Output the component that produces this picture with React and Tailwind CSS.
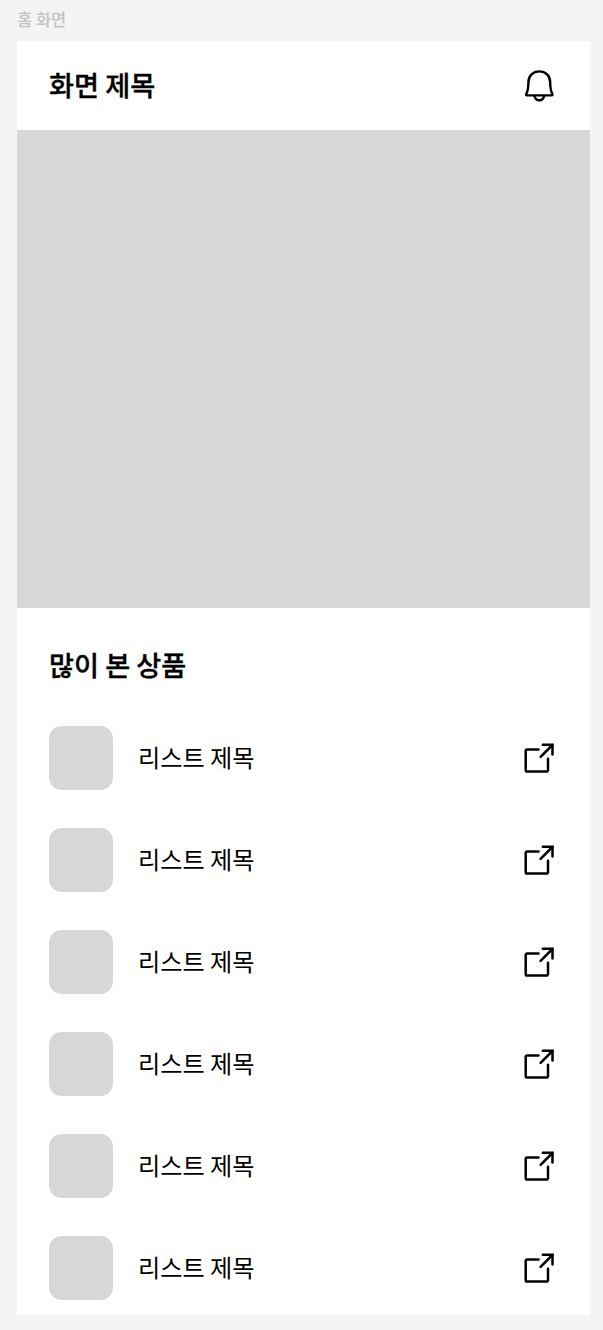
const items = [1, 2, 3, 4, 5, 6].map((id) => ({ id, title: "리스트 제목" }));

function BellIcon() {
	return (
		<svg
			className="h-9 w-9"
			viewBox="0 0 36 36"
			fill="none"
			stroke="currentColor"
			strokeWidth={2.4}
			strokeLinejoin="round"
		>
			<path d="M7.4 14.4C7.4 7.8 12 3.4 18.3 3.4s10.9 4.4 10.9 11c0 5.4.8 9 2.1 11.6.4.9.1 1.4-.7 1.4H6c-.8 0-1.1-.5-.7-1.4 1.3-2.6 2.1-6.2 2.1-11.6Z" />
			<path d="M13.4 27.8c.5 2.8 2.3 4.5 4.9 4.5s4.4-1.7 4.9-4.5" />
		</svg>
	);
}

function ExternalIcon() {
	return (
		<svg
			className="h-9 w-9"
			viewBox="0 0 36 36"
			fill="none"
			stroke="currentColor"
			strokeWidth={2.5}
			strokeLinecap="round"
			strokeLinejoin="round"
		>
			<path d="M17.5 9.4H6.3a1.6 1.6 0 0 0-1.6 1.6v18.9a1.6 1.6 0 0 0 1.6 1.6h19.1a1.6 1.6 0 0 0 1.6-1.6V18.8" />
			<path d="M19.6 16.8 31.4 5" />
			<path strokeLinejoin="miter" d="M21.8 4.8H31.5V14.4" />
		</svg>
	);
}

function ListItem({ title }) {
	return (
		<li className="flex h-[63.9px] items-center">
			<div className="h-[63.9px] w-[63.9px] rounded-[12.8px] bg-[#d7d7d7]" />
			<span className="ml-[25px] pb-0.5 text-[24.2px] leading-9">{title}</span>
			<div className="ml-auto">
				<ExternalIcon />
			</div>
		</li>
	);
}

export default function App() {
	return (
		<div className="h-[1330px] w-[603px] overflow-hidden bg-[#f4f4f4] pl-[17px] font-['Noto_Sans_CJK_KR',sans-serif] text-black">
			<div className="flex h-[41px] items-center pb-[3px] text-[16.5px] font-medium leading-5 text-[#c2c2c2]">
				홈 화면
			</div>
			<main className="h-[1274px] w-[573px] overflow-hidden bg-white">
				<header className="flex h-[89px] items-center justify-between pl-8 pr-[33px]">
					<h1 className="pb-[3px] text-[27.2px] font-medium leading-10 [-webkit-text-stroke:0.35px]">
						화면 제목
					</h1>
					<BellIcon />
				</header>
				<div className="h-[478px] bg-[#d7d7d7]" />
				<section className="pl-8 pr-[33px] pt-9">
					<h2 className="text-[27.2px] font-medium leading-10 [-webkit-text-stroke:0.35px]">
						많이 본 상품
					</h2>
					<ul className="mt-[42px] flex flex-col gap-[38.05px]">
						{items.map((item) => (
							<ListItem key={item.id} title={item.title} />
						))}
					</ul>
				</section>
			</main>
		</div>
	);
}
